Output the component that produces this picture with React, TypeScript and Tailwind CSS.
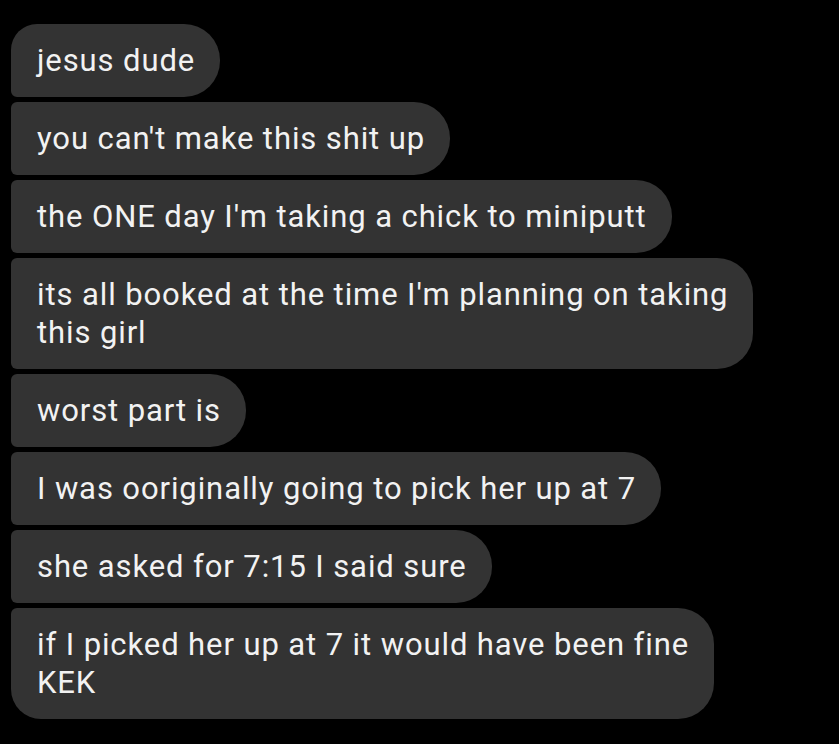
import React from 'react';

// Incoming chat messages, top to bottom (lines as wrapped on the phone)
const messages = [
  ['jesus dude'],
  ["you can't make this shit up"],
  ["the ONE day I'm taking a chick to miniputt"],
  ["its all booked at the time I'm planning on taking", 'this girl'],
  ['worst part is'],
  ['I was ooriginally going to pick her up at 7'],
  ['she asked for 7:15 I said sure'],
  ['if I picked her up at 7 it would have been fine', 'KEK'],
];

const App = () => {
  return (
    <div className="min-h-[744px] w-[839px] bg-black pt-6 pl-[11px] font-['Roboto',sans-serif]">
      <div className="flex flex-col items-start gap-[5px]">
        {messages.map((lines, i) => {
          const first = i === 0;
          const last = i === messages.length - 1;
          return (
            <div
              key={i}
              className={`bg-[#333333] pl-[26px] pr-[25px] pt-[18px] pb-[17px] text-[31px] leading-[38px] tracking-[0.9px] text-[#f2f2f2] whitespace-nowrap rounded-r-[36px] ${
                first ? 'rounded-tl-[26px]' : 'rounded-tl-[6px]'
              } ${last ? 'rounded-bl-[30px]' : 'rounded-bl-[6px]'}`}
            >
              {lines.map((line, j) => (
                <div key={j}>{line}</div>
              ))}
            </div>
          );
        })}
      </div>
    </div>
  );
};

export default App;
